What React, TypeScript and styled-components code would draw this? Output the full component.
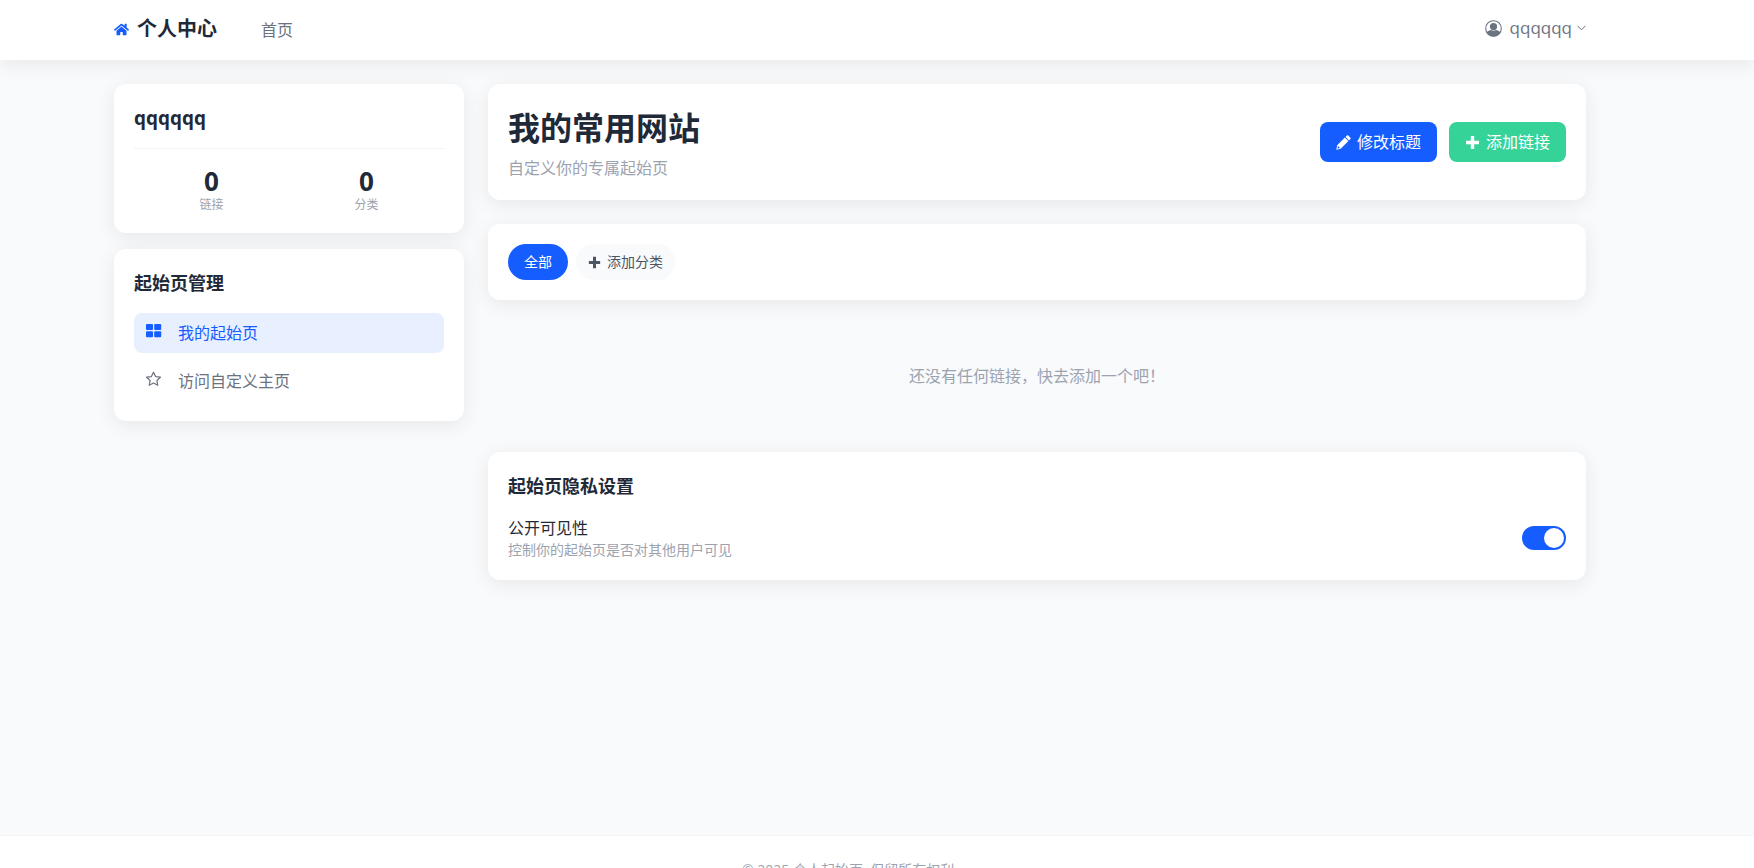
import React, { useState } from "react";
import styled, { createGlobalStyle, css } from "styled-components";
import { FaHome } from "react-icons/fa";

const color = {
  primary: "#165dff",
  success: "#36d399",
  ink: "#1f2937",
  body: "#4b5563",
  muted: "#6b7280",
  faint: "#9ca3af",
  line: "#f3f4f6",
  page: "#f9fafb",
};

const GlobalStyle = createGlobalStyle`
  *, *::before, *::after { box-sizing: border-box; }
  html { scrollbar-width: none; }
  body {
    margin: 0;
    background: #f8fafc;
    color: ${color.ink};
    font: 400 16px/24px "Open Sans", "Noto Sans CJK SC", sans-serif;
  }
  h1, h2, p, ul, dl, dd { margin: 0; padding: 0; }
  ul { list-style: none; }
  a { color: inherit; text-decoration: none; }
  button { font: inherit; border: 0; cursor: pointer; }
  svg { display: block; flex: none; }
`;

const shadow = "0 4px 20px rgba(0, 0, 0, 0.08)";

const Container = styled.div`
  max-width: 1568px;
  margin: 0 auto;
  padding: 0 75px 0 21px;
`;

const Header = styled.header`
  background: #fff;
  box-shadow: ${shadow};
`;

const HeaderBar = styled(Container)`
  display: flex;
  align-items: center;
  height: 60px;
`;

const Brand = styled.a`
  display: flex;
  align-items: center;
  gap: 8px;
  font-size: 20px;
  line-height: 28px;
  font-weight: 700;
  padding-bottom: 2px;
  svg { color: ${color.primary}; }
`;

const Nav = styled.nav`
  flex: 1;
  padding-left: 44px;
  color: ${color.muted};
`;

const UserButton = styled.button`
  display: flex;
  align-items: center;
  gap: 8px;
  padding: 0 0 4px;
  background: none;
  color: ${color.muted};
  font-size: 17px;
`;

const UserName = styled.span`
  display: flex;
  align-items: center;
  gap: 5px;
`;

const Main = styled.main`
  min-height: calc(100vh - 93px);
  padding: 24px 0;
`;

const Columns = styled(Container)`
  display: grid;
  grid-template-columns: repeat(4, minmax(0, 1fr));
  gap: 24px;
  align-items: start;
`;

const Sidebar = styled.aside`
  display: grid;
  gap: 16px;
`;

const Content = styled.div`
  grid-column: span 3;
  display: grid;
  gap: 24px;
`;

const Card = styled.section`
  padding: 20px;
  border-radius: 12px;
  background: #fff;
  box-shadow: ${shadow};
`;

const CardTitle = styled.h2`
  font-size: 18px;
  line-height: 28px;
  font-weight: 700;
  margin-bottom: 16px;
`;

const ProfileName = styled.h2`
  font-size: 19px;
  line-height: 28px;
  font-weight: 700;
  padding-bottom: 16px;
  border-bottom: 1px solid ${color.line};
`;

const Stats = styled.dl`
  display: grid;
  grid-template-columns: 1fr 1fr;
  padding-top: 16px;
  text-align: center;
`;

const Stat = styled.div`
  display: flex;
  flex-direction: column-reverse;
  dt {
    font-size: 12px;
    line-height: 16px;
    color: ${color.faint};
  }
  dd {
    font-size: 26px;
    line-height: 32px;
    font-weight: 700;
  }
`;

const Menu = styled.ul`
  display: grid;
  gap: 8px;
`;

const MenuLink = styled.a<{ $active?: boolean }>`
  display: flex;
  align-items: center;
  gap: 16px;
  height: 40px;
  padding: 0 12px;
  border-radius: 8px;
  color: ${color.muted};
  svg { margin-bottom: 4px; }
  ${(p) => p.$active && css`
    background: #e8efff;
    color: ${color.primary};
  `}
`;

const TitleRow = styled.div`
  display: flex;
  align-items: center;
  justify-content: space-between;
`;

const PageTitle = styled.h1`
  font-size: 32px;
  line-height: 48px;
  font-weight: 700;
  margin-bottom: 4px;
`;

const Hint = styled.p<{ $small?: boolean }>`
  color: ${color.faint};
  ${(p) => p.$small && css`
    font-size: 14px;
    line-height: 20px;
  `}
`;

const Actions = styled.div`
  display: flex;
  gap: 12px;
`;

const ActionButton = styled.button<{ $tone: string }>`
  display: flex;
  align-items: center;
  gap: 6px;
  height: 40px;
  padding: 0 16px;
  border-radius: 8px;
  background: ${(p) => p.$tone};
  color: #fff;
`;

const Filters = styled.div`
  display: flex;
  gap: 8px;
`;

const Pill = styled.button<{ $active?: boolean }>`
  display: flex;
  align-items: center;
  gap: 6px;
  height: 36px;
  padding: 0 ${(p) => (p.$active ? 16 : 12)}px;
  border-radius: 18px;
  font-size: 14px;
  line-height: 20px;
  background: ${(p) => (p.$active ? color.primary : color.page)};
  color: ${(p) => (p.$active ? "#fff" : color.body)};
`;

const Empty = styled.p`
  padding: 40px 0;
  text-align: center;
  color: ${color.faint};
`;

const SettingLabel = styled.label`
  display: block;
`;

const Switch = styled.input`
  appearance: none;
  width: 44px;
  height: 24px;
  margin: 0;
  padding: 2px;
  border-radius: 12px;
  background: #d1d5db;
  cursor: pointer;
  display: flex;
  &::before {
    content: "";
    width: 20px;
    height: 20px;
    border-radius: 50%;
    background: #fff;
  }
  &:checked {
    background: ${color.primary};
    justify-content: flex-end;
  }
`;

const Footer = styled.footer`
  border-top: 1px solid ${color.line};
  background: #fff;
  padding: 24px 0;
  text-align: center;
`;

const UserIcon = () => (
  <svg width="17" height="17" viewBox="0 0 17 17" fill="currentColor" aria-hidden="true">
    <circle cx="8.5" cy="8.5" r="7.8" fill="none" stroke="currentColor" strokeWidth="1.1" />
    <circle cx="8.5" cy="6.6" r="3.6" />
    <path d="M1.8 12.2C3 10.8 4.6 10.2 6 10c1.4 1.1 3.6 1.1 5 0 1.4.2 3 .8 4.2 2.2-1.3 2.6-3.8 4.2-6.7 4.2s-5.4-1.6-6.7-4.2z" />
  </svg>
);

const ChevronIcon = () => (
  <svg width="9" height="6" viewBox="0 0 9 6" fill="none" stroke="currentColor" aria-hidden="true">
    <path d="M.5.8l4 4 4-4" />
  </svg>
);

const GridIcon = () => (
  <svg width="16" height="14" viewBox="0 0 16 14" fill="currentColor" aria-hidden="true">
    <rect x="0" y="0" width="7" height="6" rx="1" />
    <rect x="8.2" y="0" width="7" height="6" rx="1" />
    <rect x="0" y="7.2" width="7" height="6" rx="1" />
    <rect x="8.2" y="7.2" width="7" height="6" rx="1" />
  </svg>
);

const StarIcon = () => (
  <svg width="16" height="16" viewBox="0 0 16 16" fill="none" stroke="currentColor" strokeWidth="1.2" strokeLinejoin="round" aria-hidden="true">
    <path d="M7.5 1.2l2.1 4.4 4.8.6-3.5 3.3.9 4.8-4.3-2.3-4.3 2.3.9-4.8L.6 6.2l4.8-.6z" />
  </svg>
);

const PencilIcon = () => (
  <svg width="15" height="15" viewBox="0 0 15 15" fill="currentColor" aria-hidden="true">
    <path d="M10.9.6c.4-.4 1-.4 1.4 0l2.1 2.1c.4.4.4 1 0 1.4l-1.3 1.3-3.5-3.5zM8.9 2.6l3.5 3.5-7.7 7.7-4.4.9.9-4.4zM2 11l-.6 2.6L4 13z" fillRule="evenodd" />
  </svg>
);

const PlusIcon = ({ size }: { size: number }) => (
  <svg width={size} height={size} viewBox="0 0 15 15" fill="currentColor" aria-hidden="true">
    <path d="M5.8 1h3.4v4.8H14v3.4H9.2V14H5.8V9.2H1V5.8h4.8z" />
  </svg>
);

export default function App() {
  const [isPublic, setIsPublic] = useState(true);

  return (
    <>
      <GlobalStyle />
      <Header>
        <HeaderBar>
          <Brand href="#">
            <FaHome size={15} />
            个人中心
          </Brand>
          <Nav>
            <a href="#">首页</a>
          </Nav>
          <UserButton type="button">
            <UserIcon />
            <UserName>
              qqqqqq
              <ChevronIcon />
            </UserName>
          </UserButton>
        </HeaderBar>
      </Header>

      <Main>
        <Columns>
          <Sidebar>
            <Card>
              <ProfileName>qqqqqq</ProfileName>
              <Stats>
                <Stat>
                  <dt>链接</dt>
                  <dd>0</dd>
                </Stat>
                <Stat>
                  <dt>分类</dt>
                  <dd>0</dd>
                </Stat>
              </Stats>
            </Card>
            <Card>
              <CardTitle>起始页管理</CardTitle>
              <Menu>
                <li>
                  <MenuLink href="#" $active>
                    <GridIcon />
                    我的起始页
                  </MenuLink>
                </li>
                <li>
                  <MenuLink href="#">
                    <StarIcon />
                    访问自定义主页
                  </MenuLink>
                </li>
              </Menu>
            </Card>
          </Sidebar>

          <Content>
            <Card>
              <TitleRow>
                <div>
                  <PageTitle>我的常用网站</PageTitle>
                  <Hint>自定义你的专属起始页</Hint>
                </div>
                <Actions>
                  <ActionButton type="button" $tone={color.primary}>
                    <PencilIcon />
                    修改标题
                  </ActionButton>
                  <ActionButton type="button" $tone={color.success}>
                    <PlusIcon size={15} />
                    添加链接
                  </ActionButton>
                </Actions>
              </TitleRow>
            </Card>

            <Card>
              <Filters>
                <Pill type="button" $active>全部</Pill>
                <Pill type="button">
                  <PlusIcon size={13} />
                  添加分类
                </Pill>
              </Filters>
            </Card>

            <Empty>还没有任何链接，快去添加一个吧！</Empty>

            <Card>
              <CardTitle>起始页隐私设置</CardTitle>
              <TitleRow>
                <div>
                  <SettingLabel htmlFor="visibility">公开可见性</SettingLabel>
                  <Hint $small>控制你的起始页是否对其他用户可见</Hint>
                </div>
                <Switch
                  id="visibility"
                  type="checkbox"
                  role="switch"
                  checked={isPublic}
                  onChange={(e) => setIsPublic(e.target.checked)}
                />
              </TitleRow>
            </Card>
          </Content>
        </Columns>
      </Main>

      <Footer>
        <Container>
          <Hint $small>© 2025 个人起始页. 保留所有权利.</Hint>
        </Container>
      </Footer>
    </>
  );
}
